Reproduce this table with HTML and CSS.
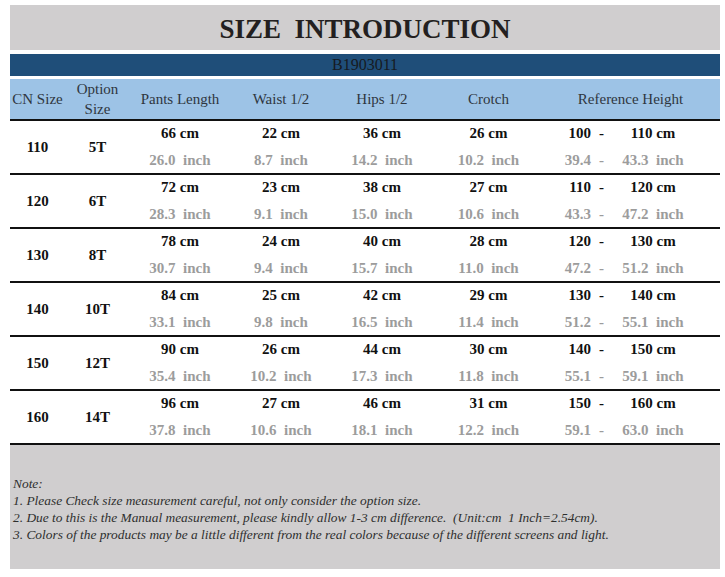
FILE: index.html
```html
<!DOCTYPE html>
<html>
<head>
<meta charset="utf-8">
<link rel="stylesheet" href="styles.css">
</head>
<body>
<div class="sheet">
  <div class="title">SIZE&nbsp; INTRODUCTION</div>
  <div class="code">B1903011</div>
  <div class="row head">
    <div class="c">CN Size</div>
    <div class="c two">Option<br>Size</div>
    <div class="c">Pants Length</div>
    <div class="c">Waist 1/2</div>
    <div class="c">Hips 1/2</div>
    <div class="c">Crotch</div>
    <div class="c ref">Reference Height</div>
  </div>

  <div class="row data">
    <div class="c key">110</div><div class="c key">5T</div>
    <div class="c m"><span class="cm">66 cm</span><span class="in">26.0&nbsp; inch</span></div>
    <div class="c m"><span class="cm">22 cm</span><span class="in">8.7&nbsp; inch</span></div>
    <div class="c m"><span class="cm">36 cm</span><span class="in">14.2&nbsp; inch</span></div>
    <div class="c m"><span class="cm">26 cm</span><span class="in">10.2&nbsp; inch</span></div>
    <div class="c m from"><span class="cm">100</span><span class="in">39.4</span></div>
    <div class="c m dash"><span class="cm">-</span><span class="in">-</span></div>
    <div class="c m"><span class="cm">110 cm</span><span class="in">43.3&nbsp; inch</span></div>
  </div>

  <div class="row data">
    <div class="c key">120</div><div class="c key">6T</div>
    <div class="c m"><span class="cm">72 cm</span><span class="in">28.3&nbsp; inch</span></div>
    <div class="c m"><span class="cm">23 cm</span><span class="in">9.1&nbsp; inch</span></div>
    <div class="c m"><span class="cm">38 cm</span><span class="in">15.0&nbsp; inch</span></div>
    <div class="c m"><span class="cm">27 cm</span><span class="in">10.6&nbsp; inch</span></div>
    <div class="c m from"><span class="cm">110</span><span class="in">43.3</span></div>
    <div class="c m dash"><span class="cm">-</span><span class="in">-</span></div>
    <div class="c m"><span class="cm">120 cm</span><span class="in">47.2&nbsp; inch</span></div>
  </div>

  <div class="row data">
    <div class="c key">130</div><div class="c key">8T</div>
    <div class="c m"><span class="cm">78 cm</span><span class="in">30.7&nbsp; inch</span></div>
    <div class="c m"><span class="cm">24 cm</span><span class="in">9.4&nbsp; inch</span></div>
    <div class="c m"><span class="cm">40 cm</span><span class="in">15.7&nbsp; inch</span></div>
    <div class="c m"><span class="cm">28 cm</span><span class="in">11.0&nbsp; inch</span></div>
    <div class="c m from"><span class="cm">120</span><span class="in">47.2</span></div>
    <div class="c m dash"><span class="cm">-</span><span class="in">-</span></div>
    <div class="c m"><span class="cm">130 cm</span><span class="in">51.2&nbsp; inch</span></div>
  </div>

  <div class="row data">
    <div class="c key">140</div><div class="c key">10T</div>
    <div class="c m"><span class="cm">84 cm</span><span class="in">33.1&nbsp; inch</span></div>
    <div class="c m"><span class="cm">25 cm</span><span class="in">9.8&nbsp; inch</span></div>
    <div class="c m"><span class="cm">42 cm</span><span class="in">16.5&nbsp; inch</span></div>
    <div class="c m"><span class="cm">29 cm</span><span class="in">11.4&nbsp; inch</span></div>
    <div class="c m from"><span class="cm">130</span><span class="in">51.2</span></div>
    <div class="c m dash"><span class="cm">-</span><span class="in">-</span></div>
    <div class="c m"><span class="cm">140 cm</span><span class="in">55.1&nbsp; inch</span></div>
  </div>

  <div class="row data">
    <div class="c key">150</div><div class="c key">12T</div>
    <div class="c m"><span class="cm">90 cm</span><span class="in">35.4&nbsp; inch</span></div>
    <div class="c m"><span class="cm">26 cm</span><span class="in">10.2&nbsp; inch</span></div>
    <div class="c m"><span class="cm">44 cm</span><span class="in">17.3&nbsp; inch</span></div>
    <div class="c m"><span class="cm">30 cm</span><span class="in">11.8&nbsp; inch</span></div>
    <div class="c m from"><span class="cm">140</span><span class="in">55.1</span></div>
    <div class="c m dash"><span class="cm">-</span><span class="in">-</span></div>
    <div class="c m"><span class="cm">150 cm</span><span class="in">59.1&nbsp; inch</span></div>
  </div>

  <div class="row data">
    <div class="c key">160</div><div class="c key">14T</div>
    <div class="c m"><span class="cm">96 cm</span><span class="in">37.8&nbsp; inch</span></div>
    <div class="c m"><span class="cm">27 cm</span><span class="in">10.6&nbsp; inch</span></div>
    <div class="c m"><span class="cm">46 cm</span><span class="in">18.1&nbsp; inch</span></div>
    <div class="c m"><span class="cm">31 cm</span><span class="in">12.2&nbsp; inch</span></div>
    <div class="c m from"><span class="cm">150</span><span class="in">59.1</span></div>
    <div class="c m dash"><span class="cm">-</span><span class="in">-</span></div>
    <div class="c m"><span class="cm">160 cm</span><span class="in">63.0&nbsp; inch</span></div>
  </div>

  <div class="notes">
    <p>Note:</p>
    <p>1. Please Check size measurement careful, not only consider the option size.</p>
    <p>2. Due to this is the Manual measurement, please kindly allow 1-3 cm difference.&nbsp; (Unit:cm&nbsp; 1 Inch=2.54cm).</p>
    <p>3. Colors of the products may be a little different from the real colors because of the different screens and light.</p>
  </div>
</div>
</body>
</html>
```

FILE: styles.css
```css
html, body {
  margin: 0;
  padding: 0;
  background: #ffffff;
}
body {
  font-family: "Liberation Serif", "Times New Roman", serif;
}
.sheet {
  width: 710px;
  padding: 5px 0 0 10px;
}
.title {
  height: 45px;
  background: #d0cecf;
  color: #231f20;
  font-weight: bold;
  font-size: 27px;
  line-height: 48px;
  text-align: center;
}
.code {
  margin-top: 4px;
  height: 22px;
  background: #1f4e79;
  color: #161a22;
  font-size: 16px;
  line-height: 22px;
  text-align: center;
}
.row {
  display: grid;
  grid-template-columns: 55px 65px 100px 102px 100px 113px 52px 9px 94px 20px;
}
.head {
  margin-top: 3px;
  height: 40px;
  background: #9dc3e6;
  color: #2f3640;
  font-size: 15px;
}
.head .c {
  display: flex;
  align-items: center;
  justify-content: center;
  text-align: center;
}
.head .two {
  line-height: 20px;
}
.head .ref {
  grid-column: 7 / 11;
  padding-right: 4px;
}
.data {
  border-top: 2px solid #111;
  height: 52px;
  font-size: 15px;
  font-weight: bold;
}
.data .c {
  text-align: center;
}
.data .key {
  display: flex;
  align-items: center;
  justify-content: center;
  color: #111;
  padding-top: 1px;
}
.data .m {
  display: flex;
  flex-direction: column;
  align-items: center;
  padding-top: 3px;
  gap: 9px;
}
.data .from {
  align-items: flex-end;
  padding-right: 6px;
}
.cm {
  line-height: 18px;
  color: #111;
  white-space: nowrap;
}
.in {
  line-height: 18px;
  color: #9c9c9c;
  white-space: nowrap;
}
.notes {
  border-top: 2px solid #111;
  height: 126px;
  background: #d0cecf;
  color: #2e2e2e;
  font-style: italic;
  font-size: 13.4px;
  padding: 30px 0 0 3px;
  box-sizing: border-box;
}
.notes p {
  margin: 0;
  line-height: 17px;
}
```
